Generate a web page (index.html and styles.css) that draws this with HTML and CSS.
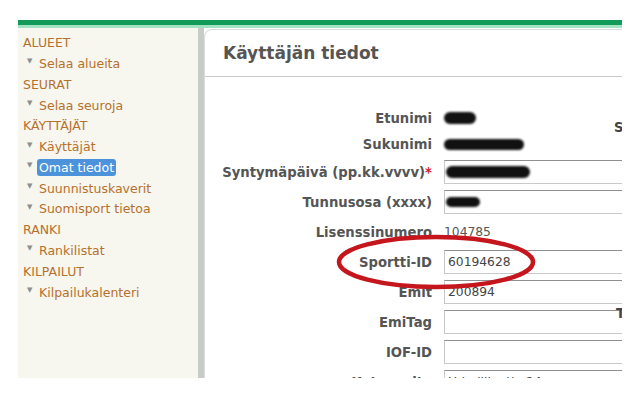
FILE: index.html
```html
<!DOCTYPE html>
<html lang="fi">
<head>
    <meta charset="UTF-8">
    <meta name="viewport" content="width=device-width, initial-scale=1.0">
    <title>Käyttäjän tiedot</title>
    <link rel="stylesheet" href="styles.css">
</head>

<body>
    <div class="frame">
        <div class="stripe"></div>

        <div class="layout">
            <!-- sidebar menu -->
            <nav class="sidebar">
                <div class="menu-head">ALUEET</div>
                <div class="menu-item"><span>Selaa alueita</span></div>
                <div class="menu-head">SEURAT</div>
                <div class="menu-item"><span>Selaa seuroja</span></div>
                <div class="menu-head">KÄYTTÄJÄT</div>
                <div class="menu-item"><span>Käyttäjät</span></div>
                <div class="menu-item"><span class="active">Omat tiedot</span></div>
                <div class="menu-item"><span>Suunnistuskaverit</span></div>
                <div class="menu-item"><span>Suomisport tietoa</span></div>
                <div class="menu-head">RANKI</div>
                <div class="menu-item"><span>Rankilistat</span></div>
                <div class="menu-head">KILPAILUT</div>
                <div class="menu-item"><span>Kilpailukalenteri</span></div>
            </nav>

            <div class="split"></div>

            <!-- user form -->
            <main class="panel">
                <h1 class="panel-title">Käyttäjän tiedot</h1>

                <div class="form">
                    <label>Etunimi</label>
                    <div class="value"><span class="redact r-first"></span></div>

                    <label>Sukunimi</label>
                    <div class="value"><span class="redact r-last"></span></div>

                    <label>Syntymäpäivä (pp.kk.vvvv)<span class="req">*</span></label>
                    <div class="value"><div class="field"><span class="redact r-birth"></span></div></div>

                    <label>Tunnusosa (xxxx)</label>
                    <div class="value"><div class="field"><span class="redact r-code"></span></div></div>

                    <label>Lisenssinumero</label>
                    <div class="value">104785</div>

                    <label>Sportti-ID</label>
                    <div class="value"><div class="field">60194628</div></div>

                    <label>Emit</label>
                    <div class="value"><div class="field">200894</div></div>

                    <label>EmiTag</label>
                    <div class="value"><div class="field"></div></div>

                    <label>IOF-ID</label>
                    <div class="value"><div class="field"></div></div>

                    <label>Katuosoite</label>
                    <div class="value"><div class="field">Urheilijantie 24</div></div>
                </div>

                <span class="side-label s1">S</span>
                <span class="side-label s2">T</span>

                <!-- red marker round the Sportti-ID row -->
                <svg class="marker" width="202" height="58" viewBox="0 0 202 58">
                    <ellipse cx="101" cy="29" rx="97" ry="25" fill="none" stroke="#c4161c" stroke-width="4.5"/>
                </svg>
            </main>
        </div>
    </div>
</body>
</html>
```

FILE: styles.css
```css
body {
    margin: 0;
    background-color: #fff;
    font-family: "DejaVu Sans", Verdana, sans-serif;
}
.frame {
    margin: 20px 0 0 18px;
    width: 604px;
    height: 353px;
    overflow: hidden;
    border-top: 5px solid #129a58;
    display: flex;
    flex-direction: column;
}
.stripe {
    height: 3px;
    background-color: #a3e2c2;
}
.layout {
    display: flex;
    flex: 1;
    min-height: 0;
}

/* sidebar */
.sidebar {
    width: 175px;
    padding: 4px 0 0 5px;
    background-color: #f7f6ef;
    font-size: 12.5px;
    color: #b6712c;
}
.menu-head {
    height: 20px;
    line-height: 20px;
    margin-top: 1px;
}
.menu-item {
    display: flex;
    align-items: center;
    height: 20.7px;
    padding-left: 4px;
}
.menu-item::before {
    content: "\25BC";
    width: 12px;
    font-size: 7px;
    line-height: 7px;
    color: #8d8d8d;
    margin-top: -3px;
}
.menu-item .active {
    background-color: #4c93dc;
    color: #fff;
    border-radius: 3px;
    padding: 1px 2px;
    margin-left: -2px;
}
.split {
    width: 6px;
    background-color: #c8ccc8;
}

/* main panel */
.panel {
    position: relative;
    flex: 1;
    margin-top: 1px;
    background-color: #fff;
    border: 1px solid #dcdcdc;
    border-right: 0;
    border-bottom: 0;
    border-top-left-radius: 8px;
    overflow: hidden;
}
.panel-title {
    margin: 0;
    height: 46px;
    line-height: 46px;
    padding-left: 18px;
    font-size: 17px;
    font-weight: bold;
    color: #555;
    border-bottom: 1px solid #c8c8c8;
}
.form {
    display: grid;
    grid-template-columns: 227px 200px;
    grid-template-rows: 26px 26px repeat(8, 30px);
    column-gap: 12px;
    padding-top: 28px;
}
.form label {
    display: flex;
    align-items: center;
    justify-content: flex-end;
    font-size: 13.2px;
    font-weight: bold;
    color: #555;
}
.req {
    color: #d0202a;
}
.value {
    display: flex;
    align-items: center;
    font-size: 12.3px;
    color: #555;
}
.field {
    box-sizing: border-box;
    width: 200px;
    height: 24px;
    border: 1px solid #c9c9c9;
    border-top-color: #8f8f8f;
    padding: 0 3px;
    display: flex;
    align-items: center;
    color: #444;
    font-size: 12.3px;
}

/* blacked out values */
.redact {
    display: inline-block;
    background-color: #111;
    border-radius: 8px;
    filter: blur(1px);
}
.r-first {
    width: 32px;
    height: 12px;
}
.r-last {
    width: 80px;
    height: 11px;
}
.r-birth {
    width: 84px;
    height: 12px;
    margin-left: -2px;
}
.r-code {
    width: 34px;
    height: 10px;
    margin-left: -2px;
}

.side-label {
    position: absolute;
    font-size: 13.2px;
    font-weight: bold;
    color: #444;
}
.s1 {
    left: 409px;
    top: 90px;
}
.s2 {
    left: 411px;
    top: 276px;
}
.marker {
    position: absolute;
    left: 130px;
    top: 203px;
}
```
